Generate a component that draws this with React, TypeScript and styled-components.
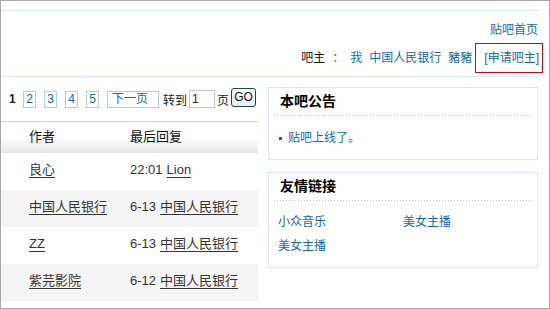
import React from 'react'
import styled, { createGlobalStyle } from 'styled-components'

const GlobalStyle = createGlobalStyle`
  html, body {
    margin: 0;
    padding: 0;
    background: #fff;
  }
  body {
    font-family: "Liberation Sans", "Noto Sans CJK SC", sans-serif;
    font-size: 12px;
    color: #222;
  }
  * {
    box-sizing: border-box;
  }
`

const LINK = '#1267b1'
const PALE_BLUE = '#dbe9fa'

const Frame = styled.div`
  width: 550px;
  height: 309px;
  border: 1px solid #a8a8a8;
  overflow: hidden;
`

const TopBar = styled.header`
  margin-top: 9px;
  width: 538px;
  height: 67px;
  border-top: 1px solid ${PALE_BLUE};
  border-bottom: 1px solid ${PALE_BLUE};
  display: flex;
  flex-direction: column;
  align-items: flex-end;
  padding-right: 1px;
`

const HomeLink = styled.a`
  margin-top: 11px;
  line-height: 16px;
  color: ${LINK};
  text-decoration: none;
`

const ManagerRow = styled.div`
  margin-top: 5px;
  height: 30px;
  display: flex;
  align-items: center;
  line-height: 16px;
  white-space: nowrap;
`

const Label = styled.span`
  color: #111;
`

const Colon = styled.span`
  margin: 0 6px 0 7px;
  color: #555;
`

const ManagerLink = styled.a`
  color: ${LINK};
  text-decoration: none;
  margin-right: 7px;
`

const ApplyBox = styled.a`
  display: flex;
  align-items: center;
  height: 30px;
  padding: 0 3px 0 8px;
  margin-right: -5px;
  margin-left: -4px;
  border: 1px solid #e00000;
  color: ${LINK};
  text-decoration: none;
`

const Main = styled.div`
  display: flex;
`

const ListColumn = styled.section`
  width: 257px;
  flex-shrink: 0;
`

const Pager = styled.div`
  height: 45px;
  display: flex;
  align-items: center;
  padding-left: 8px;
  border-bottom: 1px solid #d4d4d4;
  white-space: nowrap;

  & > * {
    flex-shrink: 0;
  }
`

const Current = styled.b`
  width: 12px;
  margin-right: 2px;
  color: #222;
`

const PageBox = styled.a<{ $wide?: boolean }>`
  height: 17px;
  width: ${(p) => (p.$wide ? '52px' : '13px')};
  margin-right: ${(p) => (p.$wide ? '4px' : '8px')};
  padding: 0 ${(p) => (p.$wide ? '4px' : '0')};
  display: flex;
  align-items: center;
  justify-content: ${(p) => (p.$wide ? 'flex-start' : 'center')};
  border: 1px solid #b4cbe6;
  color: ${LINK};
  text-decoration: none;
  line-height: 15px;
`

const JumpText = styled.span`
  margin-right: 2px;
  color: #222;
`

const PageInput = styled.input`
  width: 26px;
  height: 18px;
  margin: 0 2px 0 0;
  padding: 0 2px;
  border: 1px solid #c4c4c4;
  font: 12px "Liberation Sans", sans-serif;
  color: #222;
`

const GoButton = styled.button`
  width: 25px;
  height: 19px;
  margin: -4px 0 0 0;
  padding: 0;
  border: 1px solid #1f3e6e;
  border-radius: 3px;
  background: linear-gradient(#ffffff, #e8ebef);
  font: 12px "Liberation Sans", sans-serif;
  color: #111;
  line-height: 16px;
`

const TableHead = styled.div`
  height: 31px;
  display: flex;
  align-items: center;
  padding: 0 0 2px 28px;
  background: linear-gradient(#ffffff 45%, #e6e6e6);
  font-size: 13px;
  line-height: 16px;
  color: #111;
`

const Row = styled.div<{ $shade?: boolean }>`
  height: 37px;
  display: flex;
  align-items: center;
  padding: 0 0 3px 28px;
  background: ${(p) => (p.$shade ? '#f4f4f4' : '#ffffff')};
  color: #333;
  font-size: 13px;
  line-height: 16px;
`

const AuthorCell = styled.div`
  width: 101px;
`

const ReplyCell = styled.div`
  display: flex;
  align-items: baseline;
  gap: 4px;
`

const UserLink = styled.a`
  color: #333;
  text-decoration: underline;
  text-underline-offset: 3px;
`

const SideColumn = styled.aside`
  width: 270px;
  margin-left: 10px;
  padding-top: 10px;
  display: flex;
  flex-direction: column;
  gap: 12px;
`

const Panel = styled.div<{ $height: number }>`
  height: ${(p) => p.$height}px;
  border: 1px solid #d8e6f7;
`

const PanelTitle = styled.h3`
  margin: 0 5px;
  height: 28px;
  padding-left: 6px;
  line-height: 27px;
  font-size: 14px;
  font-weight: bold;
  color: #000;
  background: linear-gradient(to right, #c4c4c4 1px, transparent 1px) repeat-x left bottom / 3px 1px;
`

const NoticeList = styled.ul`
  list-style: none;
  margin: 0;
  padding: 14px 0 0 10px;
`

const NoticeItem = styled.li`
  display: flex;
  align-items: center;
  line-height: 16px;
  color: ${LINK};

  &::before {
    content: '';
    width: 3px;
    height: 3px;
    margin-right: 6px;
    background: ${LINK};
  }
`

const LinkGrid = styled.div`
  display: grid;
  grid-template-columns: 125px 125px;
  row-gap: 8px;
  padding: 13px 0 0 9px;
`

const FriendLink = styled.a`
  line-height: 16px;
  color: ${LINK};
  text-decoration: none;
`

const threads = [
  { author: '良心', time: '22:01', last: 'Lion' },
  { author: '中国人民银行', time: '6-13', last: '中国人民银行' },
  { author: 'ZZ', time: '6-13', last: '中国人民银行' },
  { author: '紫芫影院', time: '6-12', last: '中国人民银行' },
]

const App = () => {
  return (
    <>
      <GlobalStyle />
      <Frame>
        <TopBar>
          <HomeLink>贴吧首页</HomeLink>
          <ManagerRow>
            <Label>吧主</Label>
            <Colon>：</Colon>
            <ManagerLink>我</ManagerLink>
            <ManagerLink>中国人民银行</ManagerLink>
            <ManagerLink>豬豬</ManagerLink>
            <ApplyBox>[申请吧主]</ApplyBox>
          </ManagerRow>
        </TopBar>
        <Main>
          <ListColumn>
            <Pager>
              <Current>1</Current>
              <PageBox>2</PageBox>
              <PageBox>3</PageBox>
              <PageBox>4</PageBox>
              <PageBox>5</PageBox>
              <PageBox $wide>下一页</PageBox>
              <JumpText>转到</JumpText>
              <PageInput defaultValue="1" />
              <JumpText>页</JumpText>
              <GoButton>GO</GoButton>
            </Pager>
            <TableHead>
              <AuthorCell>作者</AuthorCell>
              <div>最后回复</div>
            </TableHead>
            {threads.map((t, i) => (
              <Row key={i} $shade={i % 2 === 1}>
                <AuthorCell>
                  <UserLink>{t.author}</UserLink>
                </AuthorCell>
                <ReplyCell>
                  <span>{t.time}</span>
                  <UserLink>{t.last}</UserLink>
                </ReplyCell>
              </Row>
            ))}
          </ListColumn>
          <SideColumn>
            <Panel $height={73}>
              <PanelTitle>本吧公告</PanelTitle>
              <NoticeList>
                <NoticeItem>贴吧上线了。</NoticeItem>
              </NoticeList>
            </Panel>
            <Panel $height={96}>
              <PanelTitle>友情链接</PanelTitle>
              <LinkGrid>
                <FriendLink>小众音乐</FriendLink>
                <FriendLink>美女主播</FriendLink>
                <FriendLink>美女主播</FriendLink>
              </LinkGrid>
            </Panel>
          </SideColumn>
        </Main>
      </Frame>
    </>
  )
}

export default App
